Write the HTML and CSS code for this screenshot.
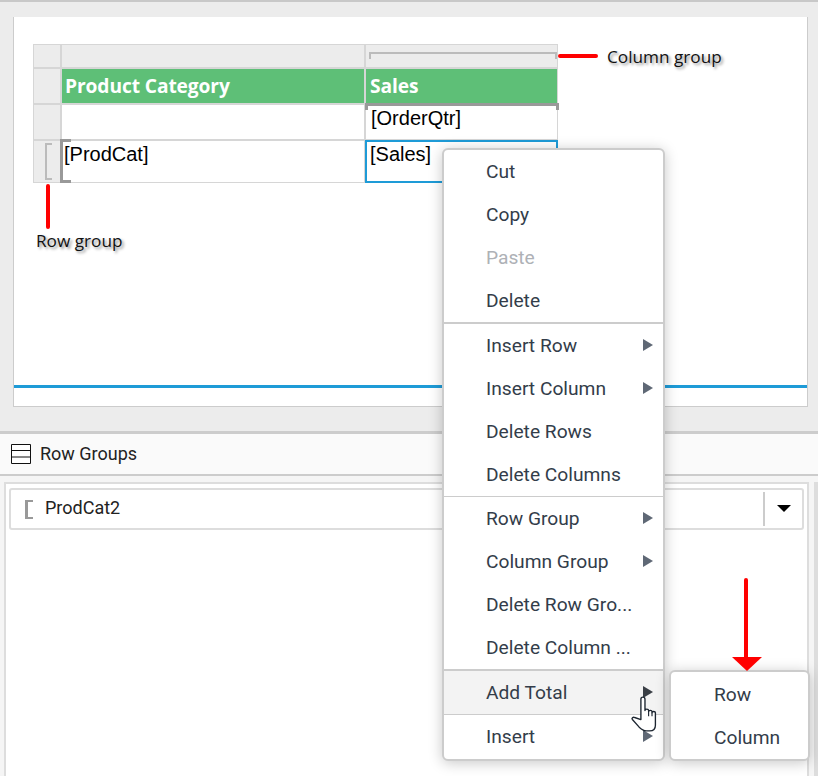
FILE: index.html
```html
<!DOCTYPE html>
<html lang="en">
<head>
<meta charset="utf-8"/>
<title>Report designer</title>
<link rel="stylesheet" href="styles.css">
</head>
<body>
<div class="stage">
	<section class="design">
		<div class="canvas">
			<div class="tablix">
				<div class="handle"></div>
				<div class="handle"></div>
				<div class="handle col-handle"><span class="col-bracket"></span></div>
				<div class="handle"></div>
				<div class="head">Product Category</div>
				<div class="head head-sales">Sales</div>
				<div class="handle"></div>
				<div class="cell"></div>
				<div class="cell order">[OrderQtr]</div>
				<div class="handle row-handle"><span class="row-bracket"></span></div>
				<div class="cell prod">[ProdCat]</div>
				<div class="cell sales">[Sales]</div>
			</div>
			<div class="page-line"></div>
		</div>
	</section>
	<section class="groups">
		<div class="groups-bar">
			<svg class="groups-icon" width="20" height="20" viewBox="0 0 20 20"><path d="M.5.5h19v19H.5zM.5 6.5h19M.5 13h19" fill="#fff" stroke="#111" stroke-width="1"/></svg>
			<span>Row Groups</span>
		</div>
		<div class="groups-body">
			<div class="groups-pane">
				<div class="group-row">
					<span class="group-bracket"></span>
					<span class="group-name">ProdCat2</span>
					<span class="group-drop"><i class="caret"></i></span>
				</div>
			</div>
			<div class="groups-side"></div>
		</div>
	</section>

	<ul class="menu">
		<li>Cut</li>
		<li>Copy</li>
		<li class="off">Paste</li>
		<li>Delete</li>
		<li class="sep"></li>
		<li class="sub">Insert Row</li>
		<li class="sub">Insert Column</li>
		<li>Delete Rows</li>
		<li>Delete Columns</li>
		<li class="sep thin"></li>
		<li class="sub">Row Group</li>
		<li class="sub">Column Group</li>
		<li>Delete Row Gro...</li>
		<li>Delete Column ...</li>
		<li class="sep"></li>
		<li class="sub hover">Add Total</li>
		<li class="sep thin"></li>
		<li class="sub">Insert</li>
	</ul>
	<ul class="menu submenu">
		<li>Row</li>
		<li>Column</li>
	</ul>

	<div class="red col-line"></div>
	<div class="note col-note">Column group</div>
	<div class="red row-line"></div>
	<div class="note row-note">Row group</div>
	<div class="red down-line"></div>
	<div class="down-head"></div>
	<svg class="hand" width="34" height="44" viewBox="0 0 30 38"><path d="M10.5 23V5c0-2.4 3.6-2.4 3.6 0v10c0-1.6 3.2-1.6 3.2 0v1c0-1.5 3-1.5 3 0v1c0-1.4 3-1.4 3 0v11c0 3-2 5-5 5h-3c-3 0-5-2-6.5-3.5L3 23c-1-1.2.6-2.6 2-1.8z" fill="#fff" stroke="#1c2530" stroke-width="1.2" stroke-linejoin="round"/><path d="M17.3 16v4M20.3 17v3" fill="none" stroke="#1c2530" stroke-width="1"/></svg>
</div>
</body>
</html>
```

FILE: styles.css
```css
html, body {
	margin:0;
	height:100%;
	overflow:hidden;
}
body {
	background:#f5f5f5;
	font:400 19.2px/1.2 Roboto, sans-serif;
	color:#333;
}
.stage {
	position:relative;
	width:818px;
	height:776px;
	overflow:hidden;
}
.design {
	box-sizing:border-box;
	height:432px;
	padding:15px 10px 25px 13px;
	background:#ececec;
	border-top:2px solid #c8c8c8;
}
.canvas {
	box-sizing:border-box;
	height:390px;
	padding:27px 0 0 19px;
	background:#fff;
	border:1px solid #ccc;
	border-top:none;
	position:relative;
}
.tablix {
	display:grid;
	width:525px;
	box-sizing:border-box;
	grid-template-columns:26px 302px 191px;
	grid-template-rows:22px 34px 34px 41px;
	gap:2px;
	padding:1px;
	background:#d6d6d6;
}
.handle {
	background:#ececec;
	position:relative;
}
.head {
	background:#5ebf77;
	color:#fff;
	font:700 19.2px/34px "Open Sans", sans-serif;
	padding-left:3px;
	letter-spacing:-.1px;
}
.head-sales {
	padding-left:4px;
}
.cell {
	background:#fff;
	color:#000;
	font:400 20px/23px "Liberation Sans", sans-serif;
	padding:2px 0 0 2px;
	position:relative;
}
.order {
	padding-left:5px;
}
.order:before {
	content:'';
	position:absolute;
	left:-1px;
	right:-2px;
	top:-2px;
	height:3px;
	background:#999;
}
.order:after {
	content:'';
	position:absolute;
	left:-1px;
	right:-2px;
	top:-2px;
	height:7px;
	border:solid #999;
	border-width:0 3px;
}
.prod:before {
	content:'';
	position:absolute;
	left:-2px;
	top:-2px;
	bottom:-1px;
	width:11px;
	border:solid #999;
	border-width:3px 0 3px 3px;
	box-sizing:border-box;
}
.sales {
	margin:-1px;
	padding:1px 0 0 3px;
	border:2px solid #1e9bd7;
	z-index:1;
}
.col-bracket {
	position:absolute;
	left:3px;
	right:0;
	top:7px;
	height:5px;
	border:solid #bbb;
	border-width:2px 2px 0;
}
.row-bracket {
	position:absolute;
	left:11px;
	top:2px;
	bottom:2px;
	width:5px;
	border:solid #bbb;
	border-width:2px 0 2px 2px;
}
.page-line {
	position:absolute;
	left:0;
	right:0;
	top:368px;
	height:3px;
	background:#1e9bd7;
}
.groups-bar {
	display:flex;
	align-items:center;
	gap:9px;
	height:40px;
	padding-left:11px;
	background:#fafafa;
	border-top:3px solid #ccc;
	border-bottom:2px solid #ccc;
	margin-top:-1px;
}
.groups-bar span {
	font-size:18px;
	color:#222;
}
.groups-body {
	display:flex;
	gap:5px;
	padding:6px 0 0 4px;
}
.groups-pane {
	box-sizing:border-box;
	width:806px;
	height:300px;
	padding:4px 3px 0;
	background:#fff;
	border:2px solid #ddd;
	border-bottom:none;
}
.groups-side {
	flex:1;
	background:#fff;
	border:2px solid #ddd;
}
.group-row {
	display:flex;
	align-items:center;
	box-sizing:border-box;
	height:42px;
	padding-left:14px;
	border:2px solid #ddd;
	border-radius:3px;
}
.group-bracket {
	width:5px;
	height:15px;
	border:solid #999;
	border-width:2px 0 2px 3px;
}
.group-name {
	flex:1;
	margin:0 0 2px 12px;
	font-size:18px;
	color:#222;
}
.group-drop {
	display:flex;
	align-items:center;
	justify-content:center;
	width:37px;
	height:34px;
	border-left:2px solid #ccc;
}
.caret {
	width:0;
	height:0;
	margin-bottom:2px;
	border:7px solid transparent;
	border-top-color:#000;
	border-bottom:none;
}
.menu {
	position:absolute;
	z-index:5;
	left:442px;
	top:148px;
	width:223px;
	box-sizing:border-box;
	margin:0;
	padding:0 0 1px;
	list-style:none;
	background:#fff;
	border:2px solid #ccc;
	border-radius:6px;
	box-shadow:0 2px 14px rgba(0,0,0,.22);
	color:#333d4a;
}
.menu li {
	position:relative;
	height:43px;
	line-height:43px;
	padding-left:42px;
	white-space:nowrap;
}
.menu .off {
	color:#aeb1b6;
}
.menu .sep {
	height:2px;
	padding:0;
	background:#ccc;
}
.menu .sep.thin {
	height:1px;
}
.menu .hover {
	background:#f3f3f3;
}
.sub:after {
	content:'';
	position:absolute;
	right:10px;
	top:15px;
	border:solid transparent;
	border-width:6px 0 6px 10px;
	border-left-color:#5f6875;
}
.hover:after {
	border-left-color:#3a3f46;
}
.submenu {
	left:669px;
	top:670px;
	width:141px;
}
.submenu li {
	padding-left:43px;
	line-height:45px;
}
.red {
	position:absolute;
	z-index:6;
	background:#f00;
	border-radius:2px;
}
.col-line {
	left:558px;
	top:54px;
	width:40px;
	height:4px;
}
.row-line {
	left:46px;
	top:184px;
	width:4px;
	height:45px;
}
.down-line {
	left:744px;
	top:578px;
	width:4px;
	height:82px;
}
.down-head {
	position:absolute;
	z-index:6;
	left:732px;
	top:657px;
	border:solid transparent;
	border-width:14px 15px 0;
	border-top-color:#f00;
}
.note {
	position:absolute;
	font:400 17.2px/20px "Open Sans", sans-serif;
	color:#111;
	text-shadow:2px 2px 3px rgba(0,0,0,.45);
	white-space:nowrap;
}
.col-note {
	left:607px;
	top:47px;
}
.row-note {
	left:36px;
	top:231px;
}
.hand {
	position:absolute;
	z-index:6;
	left:629px;
	top:693px;
}
```
